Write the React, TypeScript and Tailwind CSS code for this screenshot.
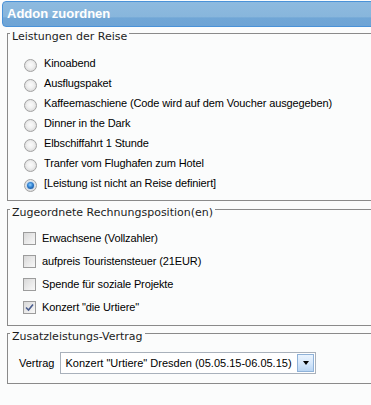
import type { ReactNode } from 'react'

const leistungen = [
  'Kinoabend',
  'Ausflugspaket',
  'Kaffeemaschiene (Code wird auf dem Voucher ausgegeben)',
  'Dinner in the Dark',
  'Elbschiffahrt 1 Stunde',
  'Tranfer vom Flughafen zum Hotel',
  '[Leistung ist nicht an Reise definiert]',
]

const positionen = [
  { label: 'Erwachsene (Vollzahler)', checked: false },
  { label: 'aufpreis Touristensteuer (21EUR)', checked: false },
  { label: 'Spende für soziale Projekte', checked: false },
  { label: 'Konzert "die Urtiere"', checked: true },
]

function Legend({ children }: { children: ReactNode }) {
  return (
    <legend className="ml-[2px] px-[2px] pt-[7px] leading-[3px] text-[11px] text-[#1c1c1c] font-['DejaVu_Sans',sans-serif]">
      {children}
    </legend>
  )
}

function Radio({ checked }: { checked: boolean }) {
  return (
    <span className="mt-[4px] flex h-[13px] w-[13px] shrink-0 items-center justify-center rounded-full border border-[#a2a2a2] bg-[radial-gradient(circle_at_50%_45%,#fbfbfb_0%,#f0f0f0_40%,#cfcfcf_100%)]">
      {checked && (
        <span className="h-[7px] w-[7px] rounded-full bg-[radial-gradient(circle_at_45%_40%,#8fd0ff_0%,#2f7fd0_45%,#0f3f80_100%)] ring-1 ring-[#c9dcef]" />
      )}
    </span>
  )
}

function Checkbox({ checked }: { checked: boolean }) {
  return (
    <span className="flex h-[13px] w-[13px] shrink-0 items-center justify-center border border-[#9c9c9c] bg-[linear-gradient(135deg,#d8d8d8_0%,#ececec_60%,#f8f8f8_100%)]">
      {checked && (
        <svg width="9" height="9" viewBox="0 0 9 9">
          <path d="M1 4.5 L3.5 7 L8 1.5" fill="none" stroke="#4a5d8e" strokeWidth="1.6" />
        </svg>
      )}
    </span>
  )
}

export default function App() {
  return (
    <div className="h-[405px] w-[371px] overflow-hidden bg-[#fbfcfc] font-['Liberation_Sans',Arial,sans-serif] text-[11px] text-black">
      <div className="ml-[2px] mt-[1px] flex h-[26px] w-[380px] items-center rounded-l-[4px] border border-[#4a92d8] bg-[linear-gradient(to_bottom,#8dbadf_0%,#88b6dc_62%,#70a6d6_66%,#6ea4d5_100%)] pl-[4px]">
        <span className="text-[13px] font-bold text-white">Addon zuordnen</span>
      </div>

      <fieldset className="ml-[7px] mt-[1px] w-[400px] border border-[#8a8a8a]">
        <Legend>Leistungen der Reise</Legend>
        <div className="flex flex-col pb-[7px] pl-[16px] pt-[15px] tracking-[-0.12px]">
          {leistungen.map((l, i) => (
            <div key={l} className="flex h-[20px] items-center gap-[7px]">
              <Radio checked={i === leistungen.length - 1} />
              <span>{l}</span>
            </div>
          ))}
        </div>
      </fieldset>

      <fieldset className="ml-[7px] mt-[3px] w-[400px] border border-[#8a8a8a]">
        <Legend>Zugeordnete Rechnungsposition(en)</Legend>
        <div className="flex flex-col pb-[6px] pl-[15px] pt-[13px] tracking-[-0.12px]">
          {positionen.map((p) => (
            <div key={p.label} className="flex h-[23px] items-center gap-[6px]">
              <Checkbox checked={p.checked} />
              <span>{p.label}</span>
            </div>
          ))}
        </div>
      </fieldset>

      <fieldset className="ml-[7px] mt-[2px] w-[400px] border border-[#8a8a8a]">
        <Legend>Zusatzleistungs-Vertrag</Legend>
        <div className="flex items-center gap-[6px] pb-[9px] pl-[11px] pt-[14px]">
          <span>Vertrag</span>
          <div className="flex h-[22px] w-[256px] items-center justify-between border border-[#a9b1bb] bg-white pl-[4px] pr-[1px]">
            <span className="whitespace-nowrap">Konzert "Urtiere" Dresden (05.05.15-06.05.15)</span>
            <span className="flex h-[18px] w-[17px] items-center justify-center border border-[#8fb2d8] bg-[linear-gradient(to_bottom,#eaf4fe_0%,#d6e8fb_50%,#b9d5f3_100%)]">
              <span className="h-0 w-0 border-x-[3.5px] border-t-[4px] border-x-transparent border-t-black" />
            </span>
          </div>
        </div>
      </fieldset>
    </div>
  )
}
